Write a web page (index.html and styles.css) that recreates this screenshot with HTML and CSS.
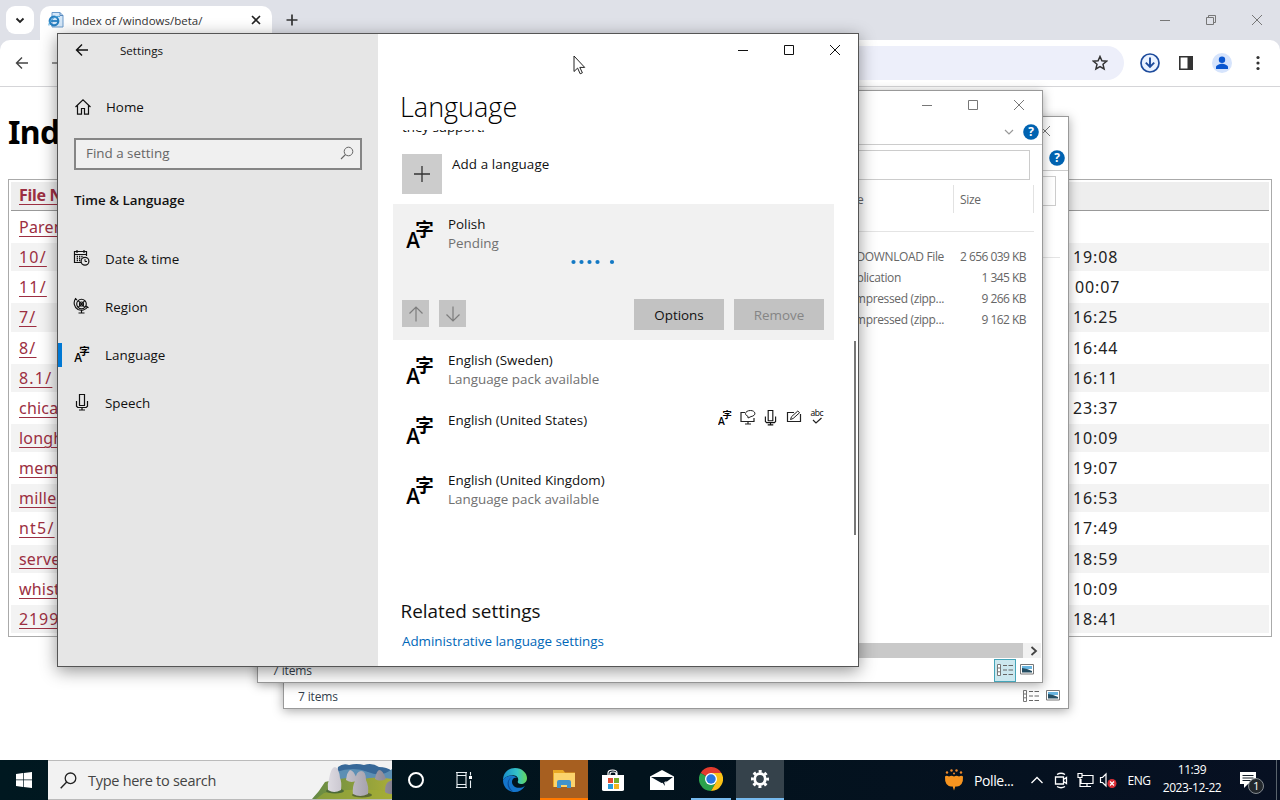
FILE: index.html
```html
<!DOCTYPE html>
<html lang="en">
<head>
<meta charset="utf-8">
<title>Desktop</title>
<link rel="stylesheet" href="styles.css">
</head>
<body>
<svg class="defs" aria-hidden="true">
  <symbol id="lang" viewBox="0 0 28 30">
    <text x="9.2" y="16.6" font-family="Noto Sans CJK SC" font-weight="700" font-size="18.5">字</text>
    <text transform="translate(0.2 29) scale(.98 1)" font-family="Open Sans" font-weight="600" font-size="21">A</text>
  </symbol>
  <symbol id="close" viewBox="0 0 12 12"><path d="M1 1l10 10M11 1L1 11" fill="none" stroke="currentColor"/></symbol>
  <symbol id="min" viewBox="0 0 12 12"><path d="M1 6.5h10" fill="none" stroke="currentColor"/></symbol>
  <symbol id="max" viewBox="0 0 12 12"><path d="M1.5 1.5h9v9h-9z" fill="none" stroke="currentColor"/></symbol>
  <symbol id="back" viewBox="0 0 14 14"><path d="M13 7H1.5M7 1.5L1.5 7 7 12.5" fill="none" stroke="currentColor" stroke-width="1.4"/></symbol>
  <symbol id="mic" viewBox="0 0 14 18"><path d="M4.500 1.500h5v11h-5zM1.500 8v5.200l1.300 1.300h8.400l1.300-1.300V8M7 14.500v2M4 17h6" fill="none" stroke="currentColor" stroke-width="1.200"/></symbol>
  <symbol id="help" viewBox="0 0 16 16"><circle cx="8" cy="8" r="7.8" fill="#0063b1"/><text x="8" y="12.3" text-anchor="middle" font-family="Open Sans" font-weight="700" font-size="12" fill="#fff">?</text></symbol>
  <symbol id="details" viewBox="0 0 18 16"><path d="M1.5 2.5h3v11h-3zM1.5 6h3M1.5 9.8h3" fill="#fff" stroke="#777"/><path d="M7 3.5h4M12.5 3.5H17M7 8h4M12.5 8H17M7 12.5h4M12.5 12.5H17" stroke="#666"/></symbol>
  <symbol id="thumb" viewBox="0 0 14 12"><path d="M.5 1.500h13v9.500H.5z" fill="#fff" stroke="#777"/><path d="M2 3h10v3H2z" fill="#69b5e0"/><path d="M2 5l5 1 5 2v1.500H2z" fill="#254e63"/></symbol>
</svg>

<div class="desktop">
  <section class="chrome">
    <div class="tabstrip">
      <div class="tabsearch"><svg width="10" height="7" viewBox="0 0 10 7"><path d="M1.500 1.500L5 5l3.500-3.500" fill="none" stroke="#222" stroke-width="1.800"/></svg></div>
      <div class="tab">
        <svg width="16" height="16" viewBox="0 0 16 16"><path d="M4 .5h8l3 3v11.500H4z" fill="#d5e7f8" stroke="#6b9acb"/><path d="M12 .5v3h3" fill="none" stroke="#5687bd"/><circle cx="6" cy="9" r="4.300" fill="none" stroke="#287fc0" stroke-width="2.200"/><path d="M3 9h7" stroke="#287fc0" stroke-width="1.800"/><path d="M1 13.500C0 10 7 3 12 4.500" fill="none" stroke="#4aa3d8"/></svg>
        <span class="tab-title">Index of /windows/beta/</span>
        <svg class="tab-x" width="10" height="10" viewBox="0 0 10 10"><path d="M1 1l8 8M9 1L1 9" stroke="#222" stroke-width="1.600"/></svg>
      </div>
      <svg class="plus" width="12" height="12" viewBox="0 0 12 12"><path d="M6 .5v11M.5 6h11" stroke="#333" stroke-width="1.700"/></svg>
      <div class="controls grey">
        <svg><use href="#min"/></svg>
        <svg viewBox="0 0 12 12"><path d="M1.500 3.500h7v7h-7zM3.500 3.500v-2h7v7h-2" fill="none" stroke="currentColor"/></svg>
        <svg><use href="#close"/></svg>
      </div>
    </div>
    <div class="toolbar">
      <svg class="nav" width="14" height="14"><use href="#back"/></svg>
      <svg class="nav" width="14" height="14" viewBox="0 0 14 14"><path d="M1 7h12M7.500 1.500L13 7l-5.500 5.500" fill="none" stroke="#777" stroke-width="1.500"/></svg>
      <div class="omnibox">
        <svg width="16" height="16" viewBox="0 0 16 16"><path d="M8 1.500l1.900 4.300 4.700.4-3.600 3.100 1.100 4.600L8 11.500l-4.100 2.400L5 9.300 1.400 6.200l4.700-.4z" fill="none" stroke="#333" stroke-width="1.500"/></svg>
      </div>
      <div class="tools">
        <svg width="20" height="20" viewBox="0 0 20 20"><circle cx="10" cy="10" r="9" fill="#eaf2ff" stroke="#1d4b9c" stroke-width="1.700"/><path d="M10 4.500v9M5.800 9.600l4.200 4.200 4.200-4.200" fill="none" stroke="#1d4b9c" stroke-width="1.900"/></svg>
        <svg width="16" height="16" viewBox="0 0 16 16"><path d="M1.800 1.800h12.400v12.400H1.800z" fill="#fff" stroke="#333" stroke-width="1.600"/><path d="M9.500 1.500H15v13H9.500z" fill="#333"/></svg>
        <svg width="20" height="20" viewBox="0 0 20 20"><circle cx="10" cy="10" r="10" fill="#d6e4fc"/><circle cx="10" cy="6.800" r="3.200" fill="#0b57d0"/><path d="M4 16v-2c0-2 4-3.300 6-3.300s6 1.300 6 3.300v2z" fill="#0b57d0"/></svg>
        <svg width="4" height="16" viewBox="0 0 4 16"><circle cx="2" cy="2.500" r="1.600" fill="#333"/><circle cx="2" cy="8" r="1.600" fill="#333"/><circle cx="2" cy="13.500" r="1.600" fill="#333"/></svg>
      </div>
    </div>
    <div class="page">
      <h1>Index</h1>
      <div class="listing">
        <div class="lrow lhead"><a>File Name</a></div>
        <div class="lrow"><a>Parent</a></div>
        <div class="lrow odd"><a class="wide">10/</a><time>19:08</time></div>
        <div class="lrow"><a class="wide">11/</a><time class="nudge">00:07</time></div>
        <div class="lrow odd"><a class="wide">7/</a><time>16:25</time></div>
        <div class="lrow"><a class="wide">8/</a><time>16:44</time></div>
        <div class="lrow odd"><a class="wide">8.1/</a><time>16:11</time></div>
        <div class="lrow"><a>chica</a><time>23:37</time></div>
        <div class="lrow odd"><a>longh</a><time>10:09</time></div>
        <div class="lrow"><a>mem</a><time>19:07</time></div>
        <div class="lrow odd"><a>mille</a><time>16:53</time></div>
        <div class="lrow"><a class="wide">nt5/</a><time>17:49</time></div>
        <div class="lrow odd"><a>serve</a><time>18:59</time></div>
        <div class="lrow"><a>whist</a><time>10:09</time></div>
        <div class="lrow odd"><a class="num">2199</a><time>18:41</time></div>
      </div>
    </div>
  </section>

  <section class="explorer rear">
    <div class="ex-title"><div class="controls grey"><svg><use href="#min"/></svg><svg><use href="#max"/></svg><svg><use href="#close"/></svg></div></div>
    <div class="ex-ribbon"><svg class="help" width="16" height="16"><use href="#help"/></svg></div>
    <div class="ex-search"></div>
    <div class="ex-columns"></div>
    <div class="ex-files"></div>
    <div class="ex-status"><span>7 items</span><div class="views"><i><svg width="18" height="16"><use href="#details"/></svg></i><svg width="14" height="12"><use href="#thumb"/></svg></div></div>
  </section>

  <section class="explorer front">
    <div class="ex-title"><div class="controls grey"><svg><use href="#min"/></svg><svg><use href="#max"/></svg><svg><use href="#close"/></svg></div></div>
    <div class="ex-ribbon"><svg width="10" height="6" viewBox="0 0 10 6"><path d="M1 1l4 4 4-4" fill="none" stroke="#999" stroke-width="1.200"/></svg><svg class="help" width="16" height="16"><use href="#help"/></svg></div>
    <div class="ex-search"></div>
    <div class="ex-columns"><span class="type">Type</span><span class="size">Size</span></div>
    <div class="ex-files">
      <div><span>DOWNLOAD File</span><b>2 656 039 KB</b></div>
      <div><span class="app">Application</span><b>1 345 KB</b></div>
      <div><span>Compressed (zipp...</span><b>9 266 KB</b></div>
      <div><span>Compressed (zipp...</span><b>9 162 KB</b></div>
    </div>
    <div class="ex-scroll"><i></i><svg width="8" height="10" viewBox="0 0 8 10"><path d="M1.500 1L6 5 1.500 9" fill="none" stroke="#444" stroke-width="1.800"/></svg></div>
    <div class="ex-status"><span>7 items</span><div class="views"><i class="on"><svg width="18" height="16"><use href="#details"/></svg></i><svg width="14" height="12"><use href="#thumb"/></svg></div></div>
  </section>

  <section class="settings">
    <aside>
      <header><svg width="14" height="14"><use href="#back"/></svg><span>Settings</span></header>
      <div class="item home"><svg width="18" height="18" viewBox="0 0 18 18"><path d="M1.500 9L9 1.800 16.500 9M3.500 7.500v8.700h4v-5.700h3v5.700h4V7.500" fill="none" stroke="#111" stroke-width="1.200"/></svg><span>Home</span></div>
      <div class="find"><span>Find a setting</span><svg width="14" height="14" viewBox="0 0 14 14"><circle cx="8.500" cy="5.500" r="4.300" fill="none" stroke="#666" stroke-width="1"/><path d="M5.500 8.500L1 13" stroke="#666" stroke-width="1.100"/></svg></div>
      <h2>Time &amp; Language</h2>
      <nav>
        <div class="item"><svg width="18" height="18" viewBox="0 0 18 18"><path d="M8.500 13.500h-7v-11h12v4.500M1.500 5.500h12M4 1v3M11 1v3" fill="none" stroke="#111" stroke-width="1.200"/><path d="M3.700 7.500h7M3.700 9.500h5M3.700 11.500h4" stroke="#111" stroke-width="1.300" stroke-dasharray="1.300 1"/><circle cx="12" cy="12.300" r="3.900" fill="#e6e6e6" stroke="#111" stroke-width="1.200"/><path d="M12 10v2.500h2" fill="none" stroke="#111"/></svg><span>Date &amp; time</span></div>
        <div class="item"><svg width="18" height="18" viewBox="0 0 18 18"><g fill="none" stroke="#111" stroke-width="1.150"><circle cx="8.500" cy="7" r="4.800"/><circle cx="8.500" cy="7" r="2"/><path d="M5.200 3.700l6.600 6.600M11.800 3.700l-6.600 6.600M3 1.200C-.5 5 1.500 10.500 5 12.500c3.500 1.600 7.500.6 9.500-2.500M2 1.500l2 1.500M13 9l2.500 1.700M8.500 13.500v2M5.500 16h6"/></g></svg><span>Region</span></div>
        <div class="item active"><svg width="16" height="17"><use href="#lang"/></svg><span>Language</span></div>
        <div class="item"><svg width="14" height="18"><use href="#mic"/></svg><span>Speech</span></div>
      </nav>
    </aside>
    <main>
      <div class="controls"><svg><use href="#min"/></svg><svg><use href="#max"/></svg><svg><use href="#close"/></svg></div>
      <h1>Language</h1>
      <div class="scroll">
        <p>they support.</p>
        <div class="add"><i><svg width="16" height="16" viewBox="0 0 16 16"><path d="M8 0v16M0 8h16" stroke="#333" stroke-width="1.300"/></svg></i><span>Add a language</span></div>
        <div class="card">
          <div class="lang"><svg width="28" height="30"><use href="#lang"/></svg><div><span>Polish</span><small>Pending</small></div></div>
          <svg class="dots" width="46" height="6" viewBox="0 0 46 6"><g fill="#1479c4"><circle cx="3.500" cy="3" r="2.100"/><circle cx="11.500" cy="3" r="2.100"/><circle cx="19.500" cy="3" r="2.100"/><circle cx="27.500" cy="3" r="2.100"/><circle cx="42" cy="3" r="2.100"/></g></svg>
          <div class="actions">
            <i><svg width="16" height="16" viewBox="0 0 16 16"><path d="M8 15.500V1M1.500 7.500L8 1l6.500 6.500" fill="none" stroke="#7d7d7d" stroke-width="1.200"/></svg></i>
            <i><svg width="16" height="16" viewBox="0 0 16 16"><path d="M8 .5V15M1.500 8.500L8 15l6.500-6.500" fill="none" stroke="#7d7d7d" stroke-width="1.200"/></svg></i>
            <button class="opt">Options</button><button disabled>Remove</button>
          </div>
        </div>
        <div class="lang"><svg width="28" height="30"><use href="#lang"/></svg><div><span>English (Sweden)</span><small>Language pack available</small></div></div>
        <div class="lang"><svg width="28" height="30"><use href="#lang"/></svg><div><span>English (United States)</span></div>
          <div class="features">
            <svg width="14" height="15"><use href="#lang"/></svg>
            <svg width="16" height="16" viewBox="0 0 16 16"><path d="M5 3.500H1v9h13V9M5 15h6M8 12.500V15" fill="none" stroke="#222" stroke-width="1.200"/><path d="M8 9V7.400C3.500 5.500 5.500 1.500 10.500 1.500S17 6.500 11 7.600z" fill="#fff" stroke="#222"/></svg>
            <svg width="13" height="17"><use href="#mic"/></svg>
            <svg width="16" height="14" viewBox="0 0 16 14"><path d="M8 2.500H1.500v9h13V4" fill="none" stroke="#222" stroke-width="1.200"/><path d="M4.500 9.500l1-2.800L11.800 1l1.800 1.700-6.500 5.800z" fill="#fff" stroke="#222"/></svg>
            <svg width="14" height="16" viewBox="0 0 14 16"><text x="7" y="6.800" text-anchor="middle" font-family="Open Sans" font-size="8.500" textLength="13">abc</text><path d="M3 11l3 3 5.500-5" fill="none" stroke="#222" stroke-width="1.200"/></svg>
          </div>
        </div>
        <div class="lang"><svg width="28" height="30"><use href="#lang"/></svg><div><span>English (United Kingdom)</span><small>Language pack available</small></div></div>
        <h3>Related settings</h3>
        <a>Administrative language settings</a>
        <div class="thumb"></div>
      </div>
    </main>
  </section>

  <svg class="cursor" width="13" height="20" viewBox="0 0 13 20"><path d="M1 1v15.500l3.600-3.400 2.600 5.700 2.200-1-2.600-5.400h4.900z" fill="#fff" stroke="#222"/></svg>

  <footer class="taskbar">
    <div class="tb"><svg width="16" height="16" viewBox="0 0 16 16"><path d="M0 2l7-1v6.500H0zM7.700.9L16 0v7.500H7.700zM0 8.300h7V15l-7-1zM7.700 8.300H16V16l-8.300-1z" fill="#fff"/></svg></div>
    <div class="search">
      <svg width="17" height="17" viewBox="0 0 17 17"><circle cx="10.500" cy="6.300" r="5.300" fill="none" stroke="#222" stroke-width="1.300"/><path d="M6.700 10L.7 16.200" stroke="#222" stroke-width="1.400"/></svg>
      <span>Type here to search</span>
      <svg class="rocks" width="80" height="38" viewBox="0 0 80 38">
        <defs><linearGradient id="rock"><stop stop-color="#dedbe2"/><stop offset="1" stop-color="#85818f"/></linearGradient><linearGradient id="grass"><stop stop-color="#648944"/><stop offset="1" stop-color="#a9ad38"/></linearGradient></defs>
        <path d="M26 6q5-4 11-2 8-2 15 0 8-3 15 2 8 0 13 4v13L24 20z" fill="#376898"/><path d="M24 11q18-6 32 0t24-3v11L24 20z" fill="#5c8fb4"/>
        <path d="M0 38q7-7 13-17 22-6 37-3 16-3 30 0v20z" fill="url(#grass)"/><path d="M12 32q27-6 68-2v8H4z" fill="#a2ad35" opacity=".55"/>
        <ellipse cx="23" cy="30" rx="9" ry="2.500" fill="#4d6937"/><ellipse cx="50" cy="34" rx="10" ry="2.500" fill="#5b6934"/>
        <path d="M16 29q-1-6 1-11Q19 6 23 6q4 1 5 11 2 4 1 12-7 4-13 0zM41 33q-1-7 2-13 1-10 6-10 5 0 5 9 3 6 2 14-8 4-15 0zM34 19q1-8 4-10 4 0 7 10-5 4-11 0zM63 18q1-7 4-9 4 0 7 9-6 3-11 0zM73 31q0-8 3-10l4-2v14q-5 0-7-2z" fill="url(#rock)"/>
      </svg>
    </div>
    <div class="tb"><svg width="18" height="18" viewBox="0 0 18 18"><circle cx="9" cy="9" r="7" fill="none" stroke="#fff" stroke-width="2"/></svg></div>
    <div class="tb"><svg width="18" height="18" viewBox="0 0 18 18"><path d="M1 1.500h11M1 16.500h11M2 4.500h9v9H2zM2 1.500v3M11 1.500v3M2 13.500v3M11 13.500v3M15.500 1v3.500M15.500 9.500V17" fill="none" stroke="#e8eef2" stroke-width="1.100"/><path d="M14 5h3v3h-3z" fill="#fff"/></svg></div>
    <div class="tb edge"><svg width="24" height="24" viewBox="0 0 24 24"><defs><linearGradient id="eg"><stop stop-color="#188dcb"/><stop offset=".6" stop-color="#35c3c7"/><stop offset="1" stop-color="#66d657"/></linearGradient></defs><path d="M0 12C0 5 5 0 12 0s12 5 12 10c0 4-3 6-6 6-2 0-4-1-3-3C17 6 5 5 0 12z" fill="url(#eg)"/><path d="M0 12C4 6 12 7 14 10c-3-1-5 1-5 4 0 5 7 8 13 4-3 4-6 6-10 6C5 24 0 19 0 12z" fill="#1475cb"/><path d="M9 9c-4 2-5 10 1 14.500C4 22 2 12 9 9z" fill="#0b4d9b"/></svg></div>
    <div class="tb files"><svg width="22" height="18" viewBox="0 0 22 18"><path d="M0 0h10l2 2.500h10V17H0z" fill="#e9a824"/><path d="M1 3h21v14H1z" fill="#fbd36c"/><path d="M4 18v-6q0-2 2-2h10q2 0 2 2v6h-4v-3H8v3z" fill="#4193cc"/></svg></div>
    <div class="tb store"><svg width="24" height="22" viewBox="0 0 24 22"><path d="M7 7V4q0-3 4.500-3T16 4v3M9 7V5q0-2 3-2t3 2v2" fill="none" stroke="#fff" stroke-width="1.200"/><path d="M1 6h22v14.500q0 1.500-2 1.500H3q-2 0-2-1.500z" fill="#fff"/><path d="M7 9h5v5H7z" fill="#e24b31"/><path d="M13 9h5v5h-5z" fill="#75ad2c"/><path d="M7 15h5v5H7z" fill="#299bd8"/><path d="M13 15h5v5h-5z" fill="#f4b51e"/></svg></div>
    <div class="tb mail"><svg width="24" height="20" viewBox="0 0 24 20"><path d="M0 6.500L12 0l12 6.500V20H0z" fill="#fff"/><path d="M1 7h22l-8 6 2-2-5.500 2z" fill="#03131f"/><path d="M12 12l3 4-1-5z" fill="#03131f"/></svg></div>
    <div class="tb gchrome"><svg width="24" height="24" viewBox="0 0 24 24"><path d="M12 12L1.600 6A12 12 0 0 1 22.400 6z" fill="#e33b2e"/><path d="M12 12L1.600 6A12 12 0 0 0 12 24l5.200-9z" fill="#2ba24c"/><path d="M12 12l5.200 3L12 24A12 12 0 0 0 22.400 6H12z" fill="#fbc116"/><circle cx="12" cy="12" r="6" fill="#fff"/><circle cx="12" cy="12" r="4.700" fill="#2876df"/></svg></div>
    <div class="tb gear"><svg width="20" height="20" viewBox="0 0 20 20"><circle cx="10" cy="10" r="7.600" fill="none" stroke="#fff" stroke-width="2.800" stroke-dasharray="2.980 2.980" stroke-dashoffset="1.490"/><circle cx="10" cy="10" r="5.300" fill="none" stroke="#fff" stroke-width="2.800"/></svg></div>
    <div class="tray">
      <svg class="pollen" width="20" height="22" viewBox="0 0 20 22"><path d="M1 7.500q1.500-1.500 4 0Q7.500 6 10 7.500q2.500-1.500 5 0 2.500-1.500 4 0 .5 9-6 10h-1.700l-1.300 4-1.300-4H7q-6.500-1-6-10z" fill="#f7941f"/><g fill="#ee892c"><circle cx="3" cy="3.500" r="1.200"/><circle cx="7.500" cy="1.500" r="1.200"/><circle cx="12.500" cy="1.500" r="1.200"/><circle cx="17" cy="3.500" r="1.200"/><circle cx="10" cy="4.600" r="1"/></g></svg>
      <span class="weather">Polle...</span>
      <svg width="14" height="8" viewBox="0 0 14 8"><path d="M1.500 7L7 1.500 12.500 7" fill="none" stroke="#fff" stroke-width="1.300"/></svg>
      <svg width="14" height="17" viewBox="0 0 14 17"><path d="M1.500 5h8v7h-8zM9.500 7.500l3-2v6l-3-2M3 2.500q4-2.500 8 0M3 14.500q4 2.500 8 0" fill="none" stroke="#fff" stroke-width="1.300"/></svg>
      <svg width="17" height="16" viewBox="0 0 17 16"><path d="M5 3.500h11v8H4V7M6 14.500h8M10 11.500v3M1 1.500h4v4H1zM3 5.500v9h3" fill="none" stroke="#fff" stroke-width="1.200"/></svg>
      <svg width="18" height="18" viewBox="0 0 18 18"><path d="M1.500 6.500h2L7 3v12l-3.500-3.500h-2z" fill="none" stroke="#fff" stroke-width="1.200"/><circle cx="13" cy="12.500" r="4.500" fill="#db2d35"/><path d="M11 10.500l4 4M15 10.500l-4 4" stroke="#fff" stroke-width="1.200"/></svg>
      <span class="eng">ENG</span>
      <div class="clock"><span>11:39</span><span>2023-12-22</span></div>
      <svg class="notes" width="26" height="26" viewBox="0 0 26 26"><path d="M1 4h16v12H9l-4 4v-4H1z" fill="#fff"/><path d="M3.500 7.500h11M3.500 10h11M3.500 12.500h8" stroke="#16202b"/><circle cx="17" cy="18" r="7.500" fill="#22272c" stroke="#858b91"/><text x="17" y="22" text-anchor="middle" font-family="Open Sans" font-size="11.500" fill="#fff">1</text></svg>
      <i></i>
    </div>
  </footer>
</div>
</body>
</html>
```
FILE: styles.css
```css
* { box-sizing: border-box; }
body { margin: 0; font: 13.4px "Open Sans", "Noto Sans", sans-serif; color: #111; }
svg { display: block; flex: none; }
h1, h2, h3, p { margin: 0; font-weight: 400; }
.defs { position: absolute; width: 0; height: 0; }
.desktop { position: relative; width: 1280px; height: 800px; overflow: hidden; background: #fff; }

.controls { display: flex; width: 138px; height: 30px; margin-left: auto; color: #111; }
.controls svg { width: 12px; height: 12px; margin: auto; }
.controls.grey { color: #777; }

/* browser */
.chrome { height: 760px; background: #dfe1e8; overflow: hidden; }
.tabstrip { height: 40px; display: flex; align-items: center; padding-left: 6px; }
.tabsearch { width: 28px; height: 28px; border-radius: 9px; background: #fff; display: grid; place-items: center; }
.tab { align-self: flex-end; width: 232px; height: 34px; margin-left: 6px; padding: 0 11px 6px 8px; border-radius: 10px 10px 0 0; background: #fff; display: flex; align-items: center; }
.tab-title { margin-left: 8px; font-size: 11.5px; color: #333; white-space: nowrap; }
.tab-x { margin-left: auto; }
.plus { margin-left: 14px; }
.tabstrip .controls { height: 40px; }
.toolbar { height: 47px; background: #fff; border-radius: 10px 10px 0 0; border-bottom: 1px solid #d5d5d8; display: flex; align-items: center; padding-left: 15px; color: #444; }
.nav { margin-right: 22px; }
.omnibox { width: 1000px; height: 34px; margin-left: 37px; border-radius: 17px; background: #edeffa; display: flex; align-items: center; justify-content: flex-end; padding-right: 16px; }
.tools { margin-left: 16px; display: flex; align-items: center; }
.tools svg + svg { margin-left: 18px; }
.tools svg:last-child { margin-left: 24px; }
.page { height: 673px; background: #fff; padding: 20px 8px 0; }
.page h1 { height: 50px; font: 700 32px/50px "Noto Sans"; letter-spacing: -.6px; color: #000; }
.listing { margin-top: 22px; height: 458px; border: 1px solid #aaa; padding: 2px 2px 0; }
.lrow { height: 28.150px; margin-bottom: 2px; padding: 0 8px; display: flex; align-items: center; font: 16px "Noto Sans"; letter-spacing: .2px; }
.lrow a { flex: none; color: #9c2f42; text-decoration: underline; text-decoration-thickness: 1px; text-underline-offset: 3px; }
.lrow .wide { letter-spacing: 1.2px; }
.lrow .num { letter-spacing: .9px; }
.lrow time { flex: none; width: 196px; margin-left: auto; padding-left: 8px; letter-spacing: .9px; color: #222; }
.lrow .nudge { padding-left: 10px; }
.lhead { height: 29px; padding-bottom: 2px; background: #eee; border-bottom: 1px solid #999; font-weight: 700; letter-spacing: -.3px; }
.odd { background: #f3f3f3; }

/* file explorer windows */
.explorer { position: absolute; width: 786px; height: 593px; background: #fff; border: 1px solid #999; box-shadow: 0 2px 10px rgba(0,0,0,.34); display: flex; flex-direction: column; color: #666; font-size: 12px; letter-spacing: -.35px; }
.rear { left: 283px; top: 116px; }
.front { left: 257px; top: 90px; }
.ex-title { height: 30px; }
.ex-title .controls { height: 28px; }
.ex-ribbon { height: 24px; border-bottom: 1px solid #ccc; display: flex; align-items: center; justify-content: flex-end; padding: 0 3px 2px 0; }
.help { margin-left: 9px; }
.ex-search { height: 30px; margin: 5px 12px 0 500px; border: 1px solid #ccc; }
.ex-columns { height: 52px; margin-right: 8px; border-bottom: 1px solid #e4e4e4; display: flex; padding: 5px 0 18px; }
.ex-columns .type { width: 118px; margin-left: 577px; text-indent: 3px; line-height: 29px; }
.ex-columns .size { width: 81px; border: solid #e2e2e2; border-width: 0 1px; padding-left: 6px; line-height: 29px; }
.ex-files { flex: 1; padding: 14px 16px 0 0; }
.ex-files div { height: 21px; display: flex; align-items: center; justify-content: flex-end; white-space: nowrap; }
.ex-files span { width: 107px; display: flex; justify-content: flex-end; }
.ex-files .app { padding-right: 43px; }
.ex-files b { width: 82px; font-weight: 400; text-align: right; letter-spacing: -.55px; }
.ex-scroll { height: 15px; margin-right: 1px; background: #f1f1f1; display: flex; align-items: center; }
.ex-scroll i { width: 765px; height: 15px; margin-right: 7px; background: #c9c9c9; }
.ex-status { height: 24px; padding: 0 8px 0 14px; display: flex; align-items: center; justify-content: space-between; color: #333e4c; letter-spacing: -.15px; }
.views { display: flex; align-items: center; gap: 4px; }
.views i { width: 22px; height: 23px; display: grid; place-items: center; }
.views .on { background: #cce8ef; border: 1px solid #45a5b9; }
.views > svg { margin-bottom: 2px; }

/* settings window */
.settings { position: absolute; left: 57px; top: 33px; width: 802px; height: 634px; background: #fff; border: 1px solid #555; box-shadow: 0 4px 16px rgba(0,0,0,.42); display: flex; }
aside { width: 320px; background: #e6e6e6; }
aside header { height: 33px; display: flex; align-items: center; padding-left: 17px; font-size: 11.6px; }
aside header svg, aside header span { margin-bottom: 1px; }
aside header span { margin-left: 31px; }
.item { height: 48px; display: flex; align-items: center; padding-left: 16px; }
.item svg { width: 18px; margin-left: -1px; margin-bottom: 2px; }
.item span { margin-left: 14px; }
.home { height: 42px; margin-top: 19px; padding-bottom: 1px; }
.home svg { margin-left: 0; margin-bottom: 0; }
.find { width: 288px; height: 32px; margin: 10px 0 0 16px; border: 2px solid #858585; background: #f0f0f0; color: #666; display: flex; align-items: center; justify-content: space-between; padding: 0 6px 2px 10px; }
aside h2 { margin: 20px 0 0 16px; line-height: 20px; font-size: 13.35px; font-weight: 600; }
aside nav { margin-top: 25px; }
.active { border-left: 4px solid transparent; padding-left: 12px; background: linear-gradient(#0078d4,#0078d4) -4px 12px / 4px 24px no-repeat; background-origin: padding-box; }
main { flex: 1; min-width: 0; }
main .controls { height: 32px; }
main h1 { height: 64px; padding: 21px 0 0 22px; font-size: 27px; font-weight: 300; line-height: 40px; color: #000; }
.scroll { position: relative; height: 536px; overflow: hidden; padding-left: 24px; }
.scroll p { margin-top: -13px; line-height: 20px; letter-spacing: -.05px; }
.add { display: flex; margin-top: 17px; height: 40px; }
.add i { width: 40px; height: 40px; display: grid; place-items: center; background: #ccc; margin-right: 10px; }
.add span { line-height: 20px; letter-spacing: .1px; }
.card { width: 441px; height: 136px; margin: 10px 0 7px -9px; padding: 0 10px 0 9px; background: #f1f1f1; }
.lang { display: flex; height: 60px; padding: 7px 0 0 4px; line-height: 19px; }
.lang > svg { margin-top: 1px; }
.lang > div:nth-child(2) { margin: -3px 0 0 14px; }
.card .lang { height: 53px; padding-top: 14px; }
.lang span, .lang small { display: block; white-space: nowrap; }
.lang small { font-size: 13.4px; color: #707070; }
.dots { margin: 2px 0 0 168px; }
.actions { display: flex; margin-top: 34px; height: 31px; align-items: center; }
.actions i { width: 27px; height: 27px; margin: 0 10px 2px 0; background: #c4c4c4; display: grid; place-items: center; }
.actions button { width: 90px; height: 31px; padding: 0; border: 0; background: #c2c2c2; font: inherit; color: #111; margin-left: 10px; }
.actions .opt { margin-left: auto; }
.actions button:disabled { color: #858585; }
.features { margin: -7px 30px 0 auto; display: grid; grid-template-columns: repeat(5,23px); height: 20px; place-items: center; }
.scroll h3 { margin: 70px 0 0 -1.5px; line-height: 28px; font-size: 18.9px; }
.scroll a { display: block; margin-top: 6px; line-height: 20px; color: #0067b8; letter-spacing: -.03px; }
.thumb { position: absolute; right: 2px; top: 211px; width: 2px; height: 194px; background: #777; }
.cursor { position: absolute; left: 573px; top: 55px; }

/* taskbar */
.taskbar { height: 40px; display: flex; background: linear-gradient(90deg,#001820,#02131d 50%,#071022); color: #fff; }
.tb { flex: none; width: 48px; display: grid; place-items: center; }
.search { flex: none; width: 344px; background: #f2f2f2; border-top: 1px solid #bbb; border-bottom: 1px solid #bbb; display: flex; align-items: center; padding-left: 12px; color: #444; font-size: 14.500px; letter-spacing: -.28px; }
.search span { margin-left: 11px; white-space: nowrap; }
.rocks { margin-left: auto; }
.edge { width: 52px; padding-left: 2px; }
.files { background: #a75f20; border-bottom: 2px solid #ff7900; }
.store { padding-left: 1px; }
.mail { width: 51px; }
.gchrome { width: 40px; margin-left: 4px; border-bottom: 2px solid #76b9ed; }
.gear { margin-left: 5px; background: #35424b; border-bottom: 2px solid #76b9ed; }
.tray { flex: none; width: 338px; margin-left: auto; display: grid; grid-template-columns: 32px 52px 22px 26px 22px 24px 36px 70px 46px 8px; align-items: center; justify-items: center; font-size: 12px; letter-spacing: -.4px; }
.tray .pollen { justify-self: start; margin-left: 2px; }
.tray .weather { justify-self: start; font-size: 14px; }
.tray .eng { margin-left: 2px; }
.clock { display: flex; flex-direction: column; align-items: center; line-height: 18px; margin: -2px 0 0 2px; white-space: nowrap; }
.notes { margin-left: 5px; margin-top: 1px; }
.tray > i { justify-self: center; width: 1px; height: 40px; background: #59636c; }
```
